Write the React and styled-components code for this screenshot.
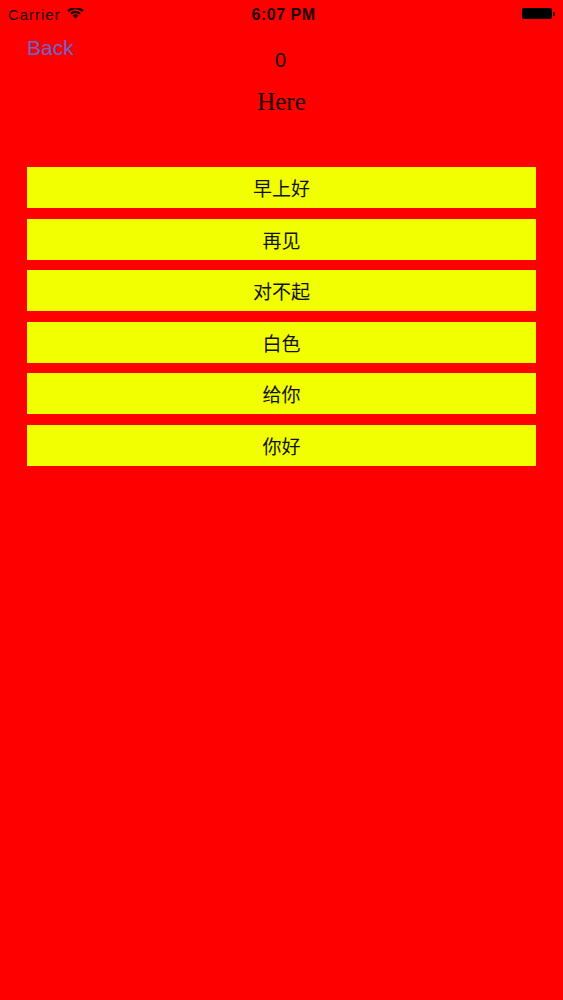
import React from "react";
import styled, { createGlobalStyle } from "styled-components";

const Global = createGlobalStyle`
  html, body { margin: 0; padding: 0; background: #ff0000; }
  #root { min-height: 1000px; background: #ff0000; }
`;

const Screen = styled.div`
  width: 563px;
  min-height: 1000px;
  background: #ff0000;
  display: flex;
  flex-direction: column;
  font-family: "Liberation Sans", Arial, sans-serif;
`;

const StatusBar = styled.div`
  height: 30px;
  display: grid;
  grid-template-columns: 1fr auto 1fr;
  align-items: center;
  padding: 0 8px 0 8px;
  color: #1a0000;
`;

const StatusLeft = styled.div`
  display: flex;
  align-items: center;
  gap: 6px;
  font-size: 15px;
  letter-spacing: 0.95px;
  line-height: 30px;
`;

const Time = styled.div`
  font-size: 16px;
  font-weight: 600;
  letter-spacing: 0.5px;
  line-height: 30px;
  transform: translateX(2px);
`;

const StatusRight = styled.div`
  display: flex;
  justify-content: flex-end;
  align-items: center;
  padding-top: 1px;
`;

const Battery = styled.div`
  position: relative;
  width: 30px;
  height: 11px;
  background: #000;
  border-radius: 2px;
  margin-right: 3px;
  margin-top: -4px;
  &::after {
    content: "";
    position: absolute;
    right: -3px;
    top: 4px;
    width: 2px;
    height: 4px;
    background: #1a0000;
    border-radius: 0 1px 1px 0;
  }
`;

const NavRow = styled.div`
  display: grid;
  grid-template-columns: 1fr auto 1fr;
  align-items: start;
  margin-top: 7px;
  padding: 0 27px;
`;

const BackButton = styled.button`
  justify-self: start;
  background: none;
  border: none;
  padding: 0;
  margin: 0;
  font-family: "Liberation Sans", Arial, sans-serif;
  font-size: 21px;
  line-height: 21px;
  color: #6966cc;
  cursor: pointer;
`;

const Counter = styled.div`
  margin-top: 13px;
  font-size: 20px;
  line-height: 20px;
  color: #1a0000;
  transform: translateX(-1px);
`;

const Title = styled.div`
  margin-top: 19px;
  text-align: center;
  font-family: "Liberation Serif", "Times New Roman", serif;
  font-size: 25px;
  line-height: 25px;
  color: #1a0000;
`;

const List = styled.div`
  display: flex;
  flex-direction: column;
  gap: 10.85px;
  margin: 53.3px 27px 0 27px;
`;

const Item = styled.div`
  height: 40.7px;
  background: #f1ff00;
  display: flex;
  align-items: center;
  justify-content: center;
  font-family: "Noto Sans CJK SC", "Liberation Sans", sans-serif;
  font-size: 19px;
  color: #111;
`;

const Wifi = () => (
  <svg width="17" height="11" viewBox="0 0 17 11" style={{ marginTop: "-3px" }}>
    <path d="M8.5 10.6 L5.6 7.6 A4.2 4.2 0 0 1 11.4 7.6 Z" fill="#1a0000" />
    <path d="M3.9 5.8 A6.6 6.6 0 0 1 13.1 5.8" stroke="#1a0000" strokeWidth="2.3" fill="none" />
    <path d="M1.1 3.1 A10.6 10.6 0 0 1 15.9 3.1" stroke="#1a0000" strokeWidth="2.3" fill="none" />
  </svg>
);

const items = ["早上好", "再见", "对不起", "白色", "给你", "你好"];

export default function App() {
  return (
    <>
      <Global />
      <Screen>
        <StatusBar>
          <StatusLeft>
            <span>Carrier</span>
            <Wifi />
          </StatusLeft>
          <Time>6:07 PM</Time>
          <StatusRight>
            <Battery />
          </StatusRight>
        </StatusBar>
        <NavRow>
          <BackButton>Back</BackButton>
          <Counter>0</Counter>
          <span />
        </NavRow>
        <Title>Here</Title>
        <List>
          {items.map((t) => (
            <Item key={t}>{t}</Item>
          ))}
        </List>
      </Screen>
    </>
  );
}
